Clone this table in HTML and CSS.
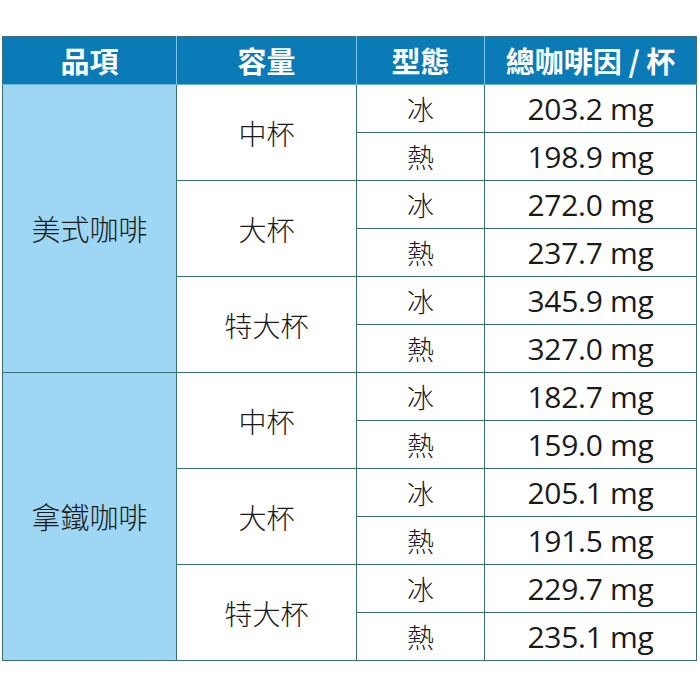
FILE: index.html
```html
<!DOCTYPE html>
<html lang="zh-Hant">
<head>
<meta charset="utf-8">
<link rel="stylesheet" href="styles.css">
</head>
<body>
<div class="wrap">
<table class="caf">
  <colgroup>
    <col class="c1"><col class="c2"><col class="c3"><col class="c4">
  </colgroup>
  <thead>
    <tr><th>品項</th><th>容量</th><th>型態</th><th>總咖啡因 / 杯</th></tr>
  </thead>
  <tbody>
    <tr><td class="item" rowspan="6">美式咖啡</td><td class="size" rowspan="2">中杯</td><td class="type">冰</td><td class="val">203.2 mg</td></tr>
    <tr><td class="type">熱</td><td class="val">198.9 mg</td></tr>
    <tr><td class="size" rowspan="2">大杯</td><td class="type">冰</td><td class="val">272.0 mg</td></tr>
    <tr><td class="type">熱</td><td class="val">237.7 mg</td></tr>
    <tr><td class="size" rowspan="2">特大杯</td><td class="type">冰</td><td class="val">345.9 mg</td></tr>
    <tr><td class="type">熱</td><td class="val">327.0 mg</td></tr>
    <tr><td class="item" rowspan="6">拿鐵咖啡</td><td class="size" rowspan="2">中杯</td><td class="type">冰</td><td class="val">182.7 mg</td></tr>
    <tr><td class="type">熱</td><td class="val">159.0 mg</td></tr>
    <tr><td class="size" rowspan="2">大杯</td><td class="type">冰</td><td class="val">205.1 mg</td></tr>
    <tr><td class="type">熱</td><td class="val">191.5 mg</td></tr>
    <tr><td class="size" rowspan="2">特大杯</td><td class="type">冰</td><td class="val">229.7 mg</td></tr>
    <tr><td class="type">熱</td><td class="val">235.1 mg</td></tr>
  </tbody>
</table>
</div>
</body>
</html>
```
FILE: styles.css
```css
html, body { margin: 0; padding: 0; background: #fff; }
.wrap { padding: 36px 0 0 2px; }
.caf {
  border-collapse: collapse;
  table-layout: fixed;
  width: 694px;
  font-family: "Noto Sans CJK TC", "Noto Sans", sans-serif;
  color: #1a1a1a;
}
.c1 { width: 174px; }
.c2 { width: 180px; }
.c3 { width: 128px; }
.c4 { width: 212px; }
.caf th {
  height: 47px;
  padding: 0;
  background: #0b7bb8;
  color: #fff;
  font-size: 29px;
  font-weight: 700;
  text-align: center;
  vertical-align: middle;
  border: 1.5px solid #3c6e78;
  border-left-color: #7cc4e6;
  border-right-color: #7cc4e6;
  border-bottom-color: #6ab6da;
  line-height: 1;
}
.caf th:first-child { border-left-color: #3c6e78; }
.caf th:last-child { border-right-color: #3c6e78; }
.slash { margin: 0 4px; }
.caf td {
  height: 47px;
  padding: 0;
  text-align: center;
  vertical-align: middle;
  border: 1.5px solid #3c6e78;
  line-height: 1;
}
.item {
  background: #9dd7f3;
  font-size: 29px;
  font-weight: 300;
}
.size {
  font-size: 28px;
  font-weight: 300;
}
.type {
  font-size: 27px;
  font-weight: 300;
}
.val {
  font-family: "Open Sans", "Noto Sans", sans-serif;
  font-size: 30px;
  font-weight: 400;
  letter-spacing: -0.3px;
}
```
